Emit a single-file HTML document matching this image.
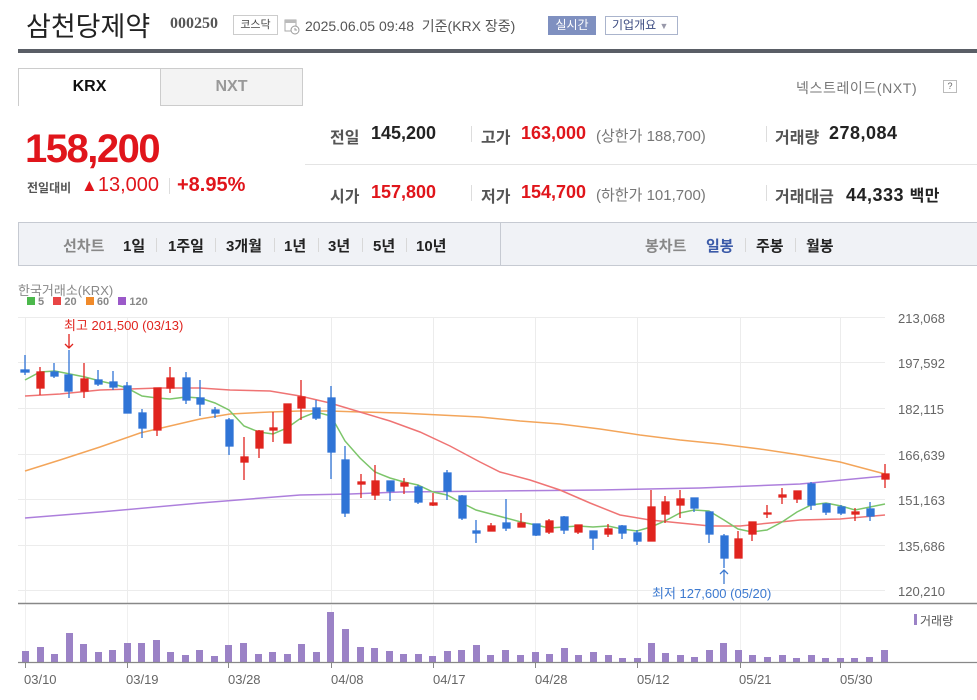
<!DOCTYPE html>
<html><head><meta charset="utf-8">
<style>
*{margin:0;padding:0;box-sizing:border-box}
body{width:977px;height:700px;background:#fff;position:relative;overflow:hidden;font-family:"Liberation Sans","Noto Sans CJK KR",sans-serif;color:#333}
.a{position:absolute;white-space:nowrap}
.b{font-weight:bold}
.red{color:#e0151b}
.t{position:absolute;top:235px;font-size:15px;font-weight:bold;color:#222;white-space:nowrap}
.s{position:absolute;top:238px;width:1px;height:14px;background:#d8d8d8}
</style></head><body>
<div class="a" style="left:26px;top:5px;font-size:27px;color:#222">삼천당제약</div>
<div class="a b" style="left:170px;top:15px;font-size:16px;color:#555;font-family:'Liberation Serif','Noto Sans CJK KR',serif">000250</div>
<div class="a" style="left:233px;top:15px;width:45px;height:20px;border:1px solid #ccc;font-size:11px;color:#444;text-align:center;line-height:18px">코스닥</div>
<svg class="a" style="left:284px;top:18px" width="16" height="17"><rect x="1" y="2" width="11" height="11" fill="#fff" stroke="#aaa"/><rect x="1" y="2" width="11" height="3" fill="#bbb"/><circle cx="11" cy="12" r="4" fill="#fff" stroke="#999"/><path d="M11 10v2h2" stroke="#999" fill="none"/></svg>
<div class="a" style="left:305px;top:16px;font-size:14px;color:#555">2025.06.05 09:48 &nbsp;기준(KRX 장중)</div>
<div class="a" style="left:548px;top:16px;width:48px;height:19px;background:#7f90c0;color:#fff;font-size:12px;text-align:center;line-height:19px">실시간</div>
<div class="a" style="left:605px;top:16px;width:73px;height:19px;border:1px solid #aab4cc;color:#3b4a80;font-size:12px;line-height:17px;padding-left:6px">기업개요 <span style="color:#99a;font-size:9px">▼</span></div>
<div class="a" style="left:18px;top:49px;width:959px;height:4px;background:#5a5e66"></div>

<div class="a b" style="left:18px;top:68px;width:143px;height:38px;border:1px solid #ccc;border-bottom:none;text-align:center;line-height:36px;font-size:16px;color:#111">KRX</div>
<div class="a b" style="left:160px;top:68px;width:143px;height:38px;border:1px solid #ccc;background:#f3f3f3;text-align:center;line-height:36px;font-size:16px;color:#999">NXT</div>
<div class="a" style="left:796px;top:78px;font-size:14px;color:#777;letter-spacing:0.6px">넥스트레이드(NXT)</div>
<div class="a" style="left:943px;top:80px;width:14px;height:13px;border:1px solid #bbb;font-size:9px;text-align:center;line-height:11px;color:#666">?</div>

<div class="a b red" style="left:25px;top:127px;font-size:40px;letter-spacing:-1.5px">158,200</div>
<div class="a b" style="left:27px;top:179px;font-size:12px;color:#555">전일대비</div>
<div class="a red" style="left:81px;top:174px;font-size:20px"><span style="font-size:17px">▲</span>13,000</div>
<div class="a" style="left:169px;top:178px;width:1px;height:16px;background:#ddd"></div>
<div class="a b red" style="left:177px;top:174px;font-size:20px">+8.95%</div>

<div class="a" style="left:305px;top:164px;width:672px;height:1px;background:#e4e4e4"></div>
<div class="a b" style="left:330px;top:124px;font-size:16px;color:#555">전일</div>
<div class="a b" style="left:371px;top:123px;font-size:18px;color:#222">145,200</div>
<div class="a" style="left:471px;top:126px;width:1px;height:16px;background:#ddd"></div>
<div class="a b" style="left:481px;top:124px;font-size:16px;color:#555">고가</div>
<div class="a b red" style="left:521px;top:123px;font-size:18px">163,000</div>
<div class="a" style="left:596px;top:125px;font-size:15px;color:#777">(상한가 188,700)</div>
<div class="a" style="left:766px;top:126px;width:1px;height:16px;background:#ddd"></div>
<div class="a b" style="left:775px;top:124px;font-size:16px;color:#555">거래량</div>
<div class="a b" style="left:829px;top:123px;font-size:18px;color:#222;letter-spacing:0.5px">278,084</div>

<div class="a b" style="left:330px;top:183px;font-size:16px;color:#555">시가</div>
<div class="a b red" style="left:371px;top:182px;font-size:18px">157,800</div>
<div class="a" style="left:471px;top:185px;width:1px;height:16px;background:#ddd"></div>
<div class="a b" style="left:481px;top:183px;font-size:16px;color:#555">저가</div>
<div class="a b red" style="left:521px;top:182px;font-size:18px">154,700</div>
<div class="a" style="left:596px;top:184px;font-size:15px;color:#777">(하한가 101,700)</div>
<div class="a" style="left:766px;top:185px;width:1px;height:16px;background:#ddd"></div>
<div class="a b" style="left:775px;top:183px;font-size:16px;color:#555">거래대금</div>
<div class="a b" style="left:846px;top:182px;font-size:18px;color:#222;letter-spacing:0.5px">44,333 <span style="font-size:16px">백만</span></div>

<div class="a" style="left:18px;top:222px;width:960px;height:44px;background:#f0f2f6;border:1px solid #c6cad2"></div>
<div class="a" style="left:500px;top:223px;width:1px;height:42px;background:#c6cad2"></div>
<div class="t" style="left:63px;color:#888">선차트</div>
<div class="t" style="left:123px">1일</div><div class="s" style="left:156px"></div>
<div class="t" style="left:168px">1주일</div><div class="s" style="left:215px"></div>
<div class="t" style="left:226px">3개월</div><div class="s" style="left:274px"></div>
<div class="t" style="left:284px">1년</div><div class="s" style="left:318px"></div>
<div class="t" style="left:328px">3년</div><div class="s" style="left:362px"></div>
<div class="t" style="left:373px">5년</div><div class="s" style="left:406px"></div>
<div class="t" style="left:416px">10년</div>
<div class="t" style="left:645px;color:#888">봉차트</div>
<div class="t" style="left:706px;color:#3b5aa8">일봉</div><div class="s" style="left:745px"></div>
<div class="t" style="left:756px">주봉</div><div class="s" style="left:795px"></div>
<div class="t" style="left:806px">월봉</div>

<div class="a" style="left:18px;top:280px;font-size:13px;color:#888">한국거래소(KRX)</div>
<div class="a b" style="left:27px;top:296px;font-size:11px;color:#888">
<span style="display:inline-block;width:8px;height:8px;background:#4cb84c"></span> 5 &nbsp;&nbsp;<span style="display:inline-block;width:8px;height:8px;background:#e84545"></span> 20 &nbsp;&nbsp;<span style="display:inline-block;width:8px;height:8px;background:#f08a2a"></span> 60 &nbsp;&nbsp;<span style="display:inline-block;width:8px;height:8px;background:#9b59c9"></span> 120</div>

<svg class="a" style="left:0;top:300px" width="977" height="400" viewBox="0 300 977 400">
<g stroke="#ececec" stroke-width="1">
<line x1="18" y1="317.5" x2="885" y2="317.5"/><line x1="18" y1="362.5" x2="885" y2="362.5"/><line x1="18" y1="408.5" x2="885" y2="408.5"/><line x1="18" y1="454.5" x2="885" y2="454.5"/><line x1="18" y1="499.5" x2="885" y2="499.5"/><line x1="18" y1="545.5" x2="885" y2="545.5"/><line x1="18" y1="590.5" x2="885" y2="590.5"/>
<line x1="25.5" y1="317" x2="25.5" y2="603"/><line x1="127.5" y1="317" x2="127.5" y2="603"/><line x1="228.5" y1="317" x2="228.5" y2="603"/><line x1="331.5" y1="317" x2="331.5" y2="603"/><line x1="433.5" y1="317" x2="433.5" y2="603"/><line x1="535.5" y1="317" x2="535.5" y2="603"/><line x1="637.5" y1="317" x2="637.5" y2="603"/><line x1="740.5" y1="317" x2="740.5" y2="603"/><line x1="840.5" y1="317" x2="840.5" y2="603"/>
</g>
<g font-size="13" fill="#666" font-family="Liberation Sans,sans-serif">
<text x="898" y="323">213,068</text><text x="898" y="368">197,592</text><text x="898" y="414">182,115</text><text x="898" y="460">166,639</text><text x="898" y="505">151,163</text><text x="898" y="551">135,686</text><text x="898" y="596">120,210</text>
</g>
<g fill="none" stroke-width="1.5">
<polyline stroke="#ad7fdc" points="25,518 100,512 200,503 300,495 350,494 400,492 500,491 600,490 700,488 800,484 885,476"/>
<polyline stroke="#f3a55a" points="25,471 60,460 100,447 140,433 170,426 200,419 230,414 270,412 300,411 330,411 360,412 400,413 440,415 480,417 520,421 560,424 600,429 640,435 680,440 720,444 760,449 800,455 840,462 885,474"/>
<polyline stroke="#ef7474" points="25,396 60,394 100,390 130,389 160,388 200,388 230,390 270,391 300,396 330,403 360,412 390,421 420,432 450,446 480,462 500,472 530,480 560,490 590,503 620,515 650,520 680,523 710,526 740,526 770,523 800,520 840,519 885,515"/>
<polyline stroke="#7cc56a" points="25,380 40,372 55,371 70,374 85,377 100,381 113,384 127,388 142,396 157,398 170,399 186,397 200,398 215,403 229,410 244,426 259,432 273,434 287,428 301,418 316,412 331,416 345,441 360,458 375,472 390,478 404,482 418,485 433,492 447,495 462,503 476,510 491,514 506,518 521,522 536,525 549,528 564,527 578,526 593,527 608,526 622,529 637,531 651,527 665,521 680,513 694,510 709,511 724,520 738,529 752,532 767,530 782,522 797,512 811,505 826,503 841,506 855,510 870,507 885,504"/>
</g>
<g stroke="#2f74d6" fill="#2f74d6" stroke-width="1.3">
<line x1="25" y1="355" x2="25" y2="375"/><rect x="21" y="370" width="8" height="2"/>
<line x1="54" y1="363" x2="54" y2="378"/><rect x="51" y="372" width="7" height="4"/>
<line x1="69" y1="350" x2="69" y2="398"/><rect x="65" y="375" width="7" height="16"/>
<line x1="98" y1="370" x2="98" y2="386"/><rect x="95" y="380" width="7" height="4"/>
<line x1="113" y1="371" x2="113" y2="390"/><rect x="110" y="382" width="7" height="5"/>
<line x1="127" y1="382" x2="127" y2="413"/><rect x="124" y="386" width="7" height="27"/>
<line x1="142" y1="409" x2="142" y2="438"/><rect x="139" y="413" width="7" height="15"/>
<line x1="186" y1="372" x2="186" y2="404"/><rect x="183" y="378" width="7" height="22"/>
<line x1="200" y1="380" x2="200" y2="416"/><rect x="197" y="398" width="7" height="6"/>
<line x1="215" y1="407" x2="215" y2="418"/><rect x="212" y="410" width="7" height="3"/>
<line x1="229" y1="418" x2="229" y2="455"/><rect x="226" y="420" width="7" height="26"/>
<line x1="316" y1="400" x2="316" y2="420"/><rect x="313" y="408" width="7" height="10"/>
<line x1="331" y1="386" x2="331" y2="479"/><rect x="328" y="398" width="7" height="54"/>
<line x1="345" y1="446" x2="345" y2="517"/><rect x="342" y="460" width="7" height="53"/>
<line x1="390" y1="481" x2="390" y2="501"/><rect x="387" y="481" width="7" height="10"/>
<line x1="418" y1="485" x2="418" y2="504"/><rect x="415" y="487" width="7" height="15"/>
<line x1="447" y1="470" x2="447" y2="500"/><rect x="444" y="473" width="7" height="18"/>
<line x1="462" y1="495" x2="462" y2="520"/><rect x="459" y="496" width="7" height="22"/>
<line x1="476" y1="520" x2="476" y2="543"/><rect x="473" y="531" width="7" height="2"/>
<line x1="506" y1="499" x2="506" y2="531"/><rect x="503" y="523" width="7" height="5"/>
<line x1="536" y1="524" x2="536" y2="536"/><rect x="533" y="524" width="7" height="11"/>
<line x1="564" y1="516" x2="564" y2="534"/><rect x="561" y="517" width="7" height="13"/>
<line x1="593" y1="531" x2="593" y2="550"/><rect x="590" y="531" width="7" height="7"/>
<line x1="622" y1="525" x2="622" y2="539"/><rect x="619" y="526" width="7" height="7"/>
<line x1="637" y1="530" x2="637" y2="545"/><rect x="634" y="533" width="7" height="8"/>
<line x1="694" y1="498" x2="694" y2="512"/><rect x="691" y="498" width="7" height="10"/>
<line x1="709" y1="512" x2="709" y2="543"/><rect x="706" y="512" width="7" height="22"/>
<line x1="724" y1="534" x2="724" y2="568"/><rect x="721" y="536" width="7" height="22"/>
<line x1="811" y1="482" x2="811" y2="510"/><rect x="808" y="484" width="7" height="21"/>
<line x1="826" y1="503" x2="826" y2="515"/><rect x="823" y="504" width="7" height="8"/>
<line x1="841" y1="505" x2="841" y2="515"/><rect x="838" y="507" width="7" height="6"/>
<line x1="870" y1="502" x2="870" y2="521"/><rect x="867" y="509" width="7" height="7"/>
</g>
<g stroke="#e0241e" fill="#e0241e" stroke-width="1.3">
<line x1="40" y1="367" x2="40" y2="395"/><rect x="37" y="372" width="7" height="16"/>
<line x1="84" y1="363" x2="84" y2="398"/><rect x="81" y="379" width="7" height="12"/>
<line x1="157" y1="388" x2="157" y2="436"/><rect x="154" y="388" width="7" height="42"/>
<line x1="170" y1="367" x2="170" y2="393"/><rect x="167" y="378" width="7" height="10"/>
<line x1="244" y1="437" x2="244" y2="480"/><rect x="241" y="457" width="7" height="5"/>
<line x1="259" y1="430" x2="259" y2="458"/><rect x="256" y="431" width="7" height="17"/>
<line x1="273" y1="412" x2="273" y2="442"/><rect x="270" y="428" width="7" height="2"/>
<line x1="287" y1="404" x2="287" y2="443"/><rect x="284" y="404" width="7" height="39"/>
<line x1="301" y1="380" x2="301" y2="420"/><rect x="298" y="397" width="7" height="11"/>
<line x1="361" y1="474" x2="361" y2="498"/><rect x="358" y="482" width="7" height="2"/>
<line x1="375" y1="465" x2="375" y2="500"/><rect x="372" y="481" width="7" height="14"/>
<line x1="404" y1="478" x2="404" y2="494"/><rect x="401" y="483" width="7" height="3"/>
<line x1="433" y1="493" x2="433" y2="506"/><rect x="430" y="503" width="7" height="2"/>
<line x1="491" y1="523" x2="491" y2="531"/><rect x="488" y="526" width="7" height="5"/>
<line x1="521" y1="513" x2="521" y2="527"/><rect x="518" y="523" width="7" height="4"/>
<line x1="549" y1="519" x2="549" y2="534"/><rect x="546" y="521" width="7" height="11"/>
<line x1="578" y1="525" x2="578" y2="534"/><rect x="575" y="525" width="7" height="7"/>
<line x1="608" y1="524" x2="608" y2="537"/><rect x="605" y="529" width="7" height="5"/>
<line x1="651" y1="490" x2="651" y2="541"/><rect x="648" y="507" width="7" height="34"/>
<line x1="665" y1="496" x2="665" y2="523"/><rect x="662" y="502" width="7" height="12"/>
<line x1="680" y1="490" x2="680" y2="518"/><rect x="677" y="499" width="7" height="6"/>
<line x1="738" y1="531" x2="738" y2="558"/><rect x="735" y="539" width="7" height="19"/>
<line x1="752" y1="522" x2="752" y2="541"/><rect x="749" y="522" width="7" height="12"/>
<line x1="767" y1="505" x2="767" y2="518"/><rect x="764" y="513" width="7" height="1"/>
<line x1="782" y1="488" x2="782" y2="504"/><rect x="779" y="495" width="7" height="2"/>
<line x1="797" y1="491" x2="797" y2="503"/><rect x="794" y="491" width="7" height="8"/>
<line x1="855" y1="508" x2="855" y2="521"/><rect x="852" y="512" width="7" height="2"/>
<line x1="885" y1="464" x2="885" y2="488"/><rect x="882" y="474" width="7" height="5"/>
</g>
<text x="64" y="330" font-size="13" fill="#e0241e" font-family="Liberation Sans,Noto Sans CJK KR,sans-serif">최고 201,500 (03/13)</text>
<path d="M69 334v14M65 344l4 4 4-4" stroke="#e0241e" fill="none" stroke-width="1.3"/>
<text x="652" y="598" font-size="13" fill="#3d7ad0" font-family="Liberation Sans,Noto Sans CJK KR,sans-serif">최저 127,600 (05/20)</text>
<path d="M724 584v-14M720 574l4-4 4 4" stroke="#3d7ad0" fill="none" stroke-width="1.3"/>
<line x1="18" y1="603.5" x2="977" y2="603.5" stroke="#888" stroke-width="1.5"/>
<g stroke="#f0f0f0"><line x1="25.5" y1="605" x2="25.5" y2="662"/><line x1="127.5" y1="605" x2="127.5" y2="662"/><line x1="228.5" y1="605" x2="228.5" y2="662"/><line x1="331.5" y1="605" x2="331.5" y2="662"/><line x1="433.5" y1="605" x2="433.5" y2="662"/><line x1="535.5" y1="605" x2="535.5" y2="662"/><line x1="637.5" y1="605" x2="637.5" y2="662"/><line x1="740.5" y1="605" x2="740.5" y2="662"/><line x1="840.5" y1="605" x2="840.5" y2="662"/></g>
<rect x="914" y="614" width="3" height="11" fill="#9b82c6"/>
<text x="920" y="625" font-size="12" fill="#555" font-family="Liberation Sans,Noto Sans CJK KR,sans-serif">거래량</text>
<g fill="#9b82c6">
<rect x="22" y="651" width="7" height="11"/><rect x="37" y="647" width="7" height="15"/><rect x="51" y="654" width="7" height="8"/><rect x="66" y="633" width="7" height="29"/><rect x="80" y="644" width="7" height="18"/><rect x="95" y="652" width="7" height="10"/><rect x="109" y="650" width="7" height="12"/><rect x="124" y="643" width="7" height="19"/><rect x="138" y="643" width="7" height="19"/><rect x="153" y="640" width="7" height="22"/><rect x="167" y="652" width="7" height="10"/><rect x="182" y="655" width="7" height="7"/><rect x="196" y="650" width="7" height="12"/><rect x="211" y="656" width="7" height="6"/><rect x="225" y="645" width="7" height="17"/><rect x="240" y="643" width="7" height="19"/><rect x="255" y="654" width="7" height="8"/><rect x="269" y="652" width="7" height="10"/><rect x="284" y="654" width="7" height="8"/><rect x="298" y="644" width="7" height="18"/><rect x="313" y="652" width="7" height="10"/><rect x="327" y="612" width="7" height="50"/><rect x="342" y="629" width="7" height="33"/><rect x="357" y="647" width="7" height="15"/><rect x="371" y="648" width="7" height="14"/><rect x="386" y="651" width="7" height="11"/><rect x="400" y="654" width="7" height="8"/><rect x="415" y="654" width="7" height="8"/><rect x="429" y="656" width="7" height="6"/><rect x="444" y="651" width="7" height="11"/><rect x="458" y="650" width="7" height="12"/><rect x="473" y="645" width="7" height="17"/><rect x="487" y="655" width="7" height="7"/><rect x="502" y="650" width="7" height="12"/><rect x="517" y="655" width="7" height="7"/><rect x="532" y="652" width="7" height="10"/><rect x="546" y="654" width="7" height="8"/><rect x="561" y="648" width="7" height="14"/><rect x="575" y="655" width="7" height="7"/><rect x="590" y="652" width="7" height="10"/><rect x="605" y="655" width="7" height="7"/><rect x="619" y="658" width="7" height="4"/><rect x="634" y="658" width="7" height="4"/><rect x="648" y="643" width="7" height="19"/><rect x="662" y="653" width="7" height="9"/><rect x="677" y="655" width="7" height="7"/><rect x="691" y="657" width="7" height="5"/><rect x="706" y="650" width="7" height="12"/><rect x="720" y="643" width="7" height="19"/><rect x="735" y="650" width="7" height="12"/><rect x="749" y="655" width="7" height="7"/><rect x="764" y="657" width="7" height="5"/><rect x="779" y="655" width="7" height="7"/><rect x="793" y="658" width="7" height="4"/><rect x="808" y="655" width="7" height="7"/><rect x="822" y="658" width="7" height="4"/><rect x="837" y="658" width="7" height="4"/><rect x="851" y="658" width="7" height="4"/><rect x="866" y="657" width="7" height="5"/><rect x="881" y="650" width="7" height="12"/>
</g>
<line x1="18" y1="662.5" x2="977" y2="662.5" stroke="#888" stroke-width="1.2"/>
<g stroke="#888"><line x1="25.5" y1="662" x2="25.5" y2="668"/><line x1="127.5" y1="662" x2="127.5" y2="668"/><line x1="228.5" y1="662" x2="228.5" y2="668"/><line x1="331.5" y1="662" x2="331.5" y2="668"/><line x1="433.5" y1="662" x2="433.5" y2="668"/><line x1="535.5" y1="662" x2="535.5" y2="668"/><line x1="637.5" y1="662" x2="637.5" y2="668"/><line x1="740.5" y1="662" x2="740.5" y2="668"/><line x1="840.5" y1="662" x2="840.5" y2="668"/></g>
<g font-size="13" fill="#666" font-family="Liberation Sans,sans-serif">
<text x="24" y="684">03/10</text><text x="126" y="684">03/19</text><text x="228" y="684">03/28</text><text x="331" y="684">04/08</text><text x="433" y="684">04/17</text><text x="535" y="684">04/28</text><text x="637" y="684">05/12</text><text x="739" y="684">05/21</text><text x="840" y="684">05/30</text>
</g>
</svg>
</body></html>
